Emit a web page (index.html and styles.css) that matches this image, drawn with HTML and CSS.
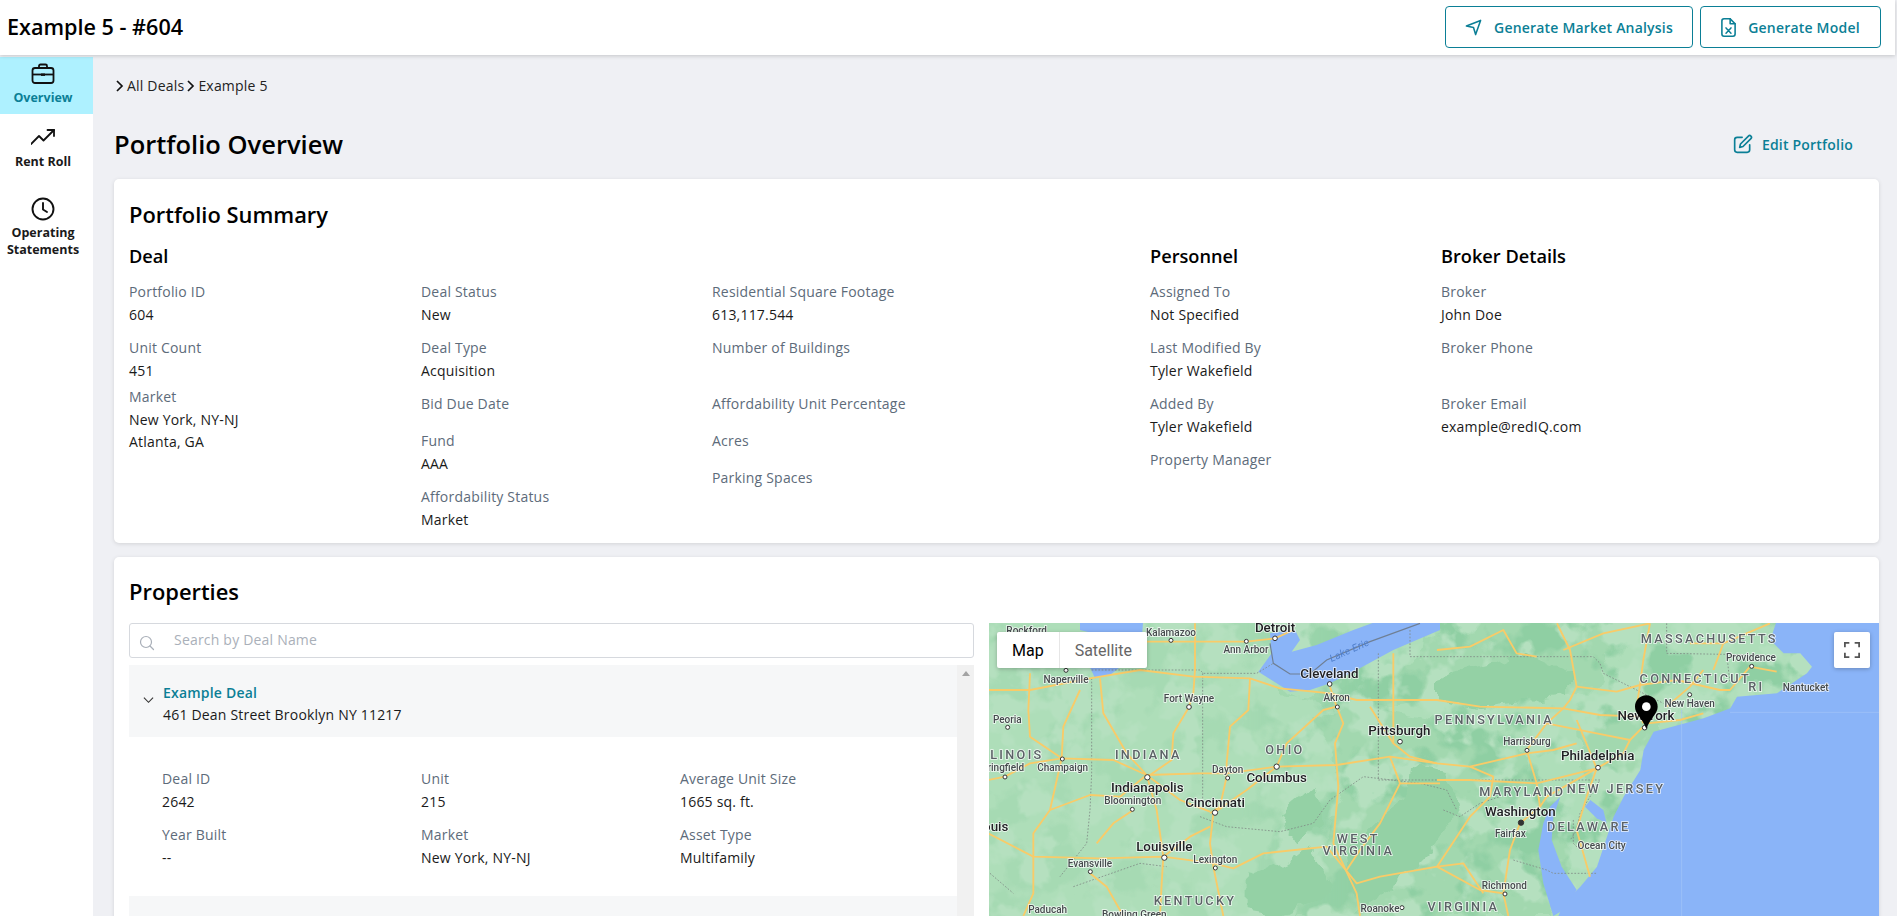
FILE: index.html
```html
<!DOCTYPE html>
<html lang="en">
<head>
<meta charset="utf-8">
<title>Example 5 - #604</title>
<link rel="stylesheet" href="styles.css">
</head>
<body>
<header class="topbar">
  <h1 class="deal-title">Example 5 - #604</h1>
  <div class="actions">
    <button class="btn btn-market">
      <svg class="btn-icon" viewBox="0 0 24 24" fill="none" stroke="currentColor" stroke-width="2.2" stroke-linejoin="round" stroke-linecap="round"><path d="M2 10 22 2l-7 20-3-10z"/></svg>
      Generate Market Analysis
    </button>
    <button class="btn btn-model">
      <svg class="btn-icon" viewBox="3 0.5 18 23" fill="none" stroke="currentColor" stroke-width="1.9" stroke-linejoin="round" stroke-linecap="round"><path d="M14 1.500H6.500A2.500 2.500 0 0 0 4 4v16a2.500 2.500 0 0 0 2.500 2.500h11A2.500 2.500 0 0 0 20 20V7.500z"/><path d="M14 1.500v6h6"/><path d="m9 12.500 6 6.500M15 12.500l-6 6.500" stroke-width="1.800"/></svg>
      Generate Model
    </button>
  </div>
</header>
<div class="shell">
  <nav class="sidebar">
    <a class="nav-item nav-active">
      <svg class="nav-icon" viewBox="0 0 24 24" fill="none" stroke="#111" stroke-width="1.8" stroke-linejoin="round"><rect x="1.500" y="6" width="21" height="15" rx="2.500"/><path d="M8 6V4a1.500 1.500 0 0 1 1.500-1.500h5A1.500 1.500 0 0 1 16 4v2"/><path d="M1.500 12.500h21"/><rect x="10" y="11.500" width="4" height="2.400" fill="#111" stroke="none"/></svg>
      <span>Overview</span>
    </a>
    <a class="nav-item nav-rent">
      <svg class="nav-icon" viewBox="0 0 24 24" fill="none" stroke="#111" stroke-width="1.8" stroke-linecap="round" stroke-linejoin="round"><path d="m0 19 8-8 4.500 4.500L23 5"/><path d="M16.500 5H23v6"/></svg>
      <span>Rent Roll</span>
    </a>
    <a class="nav-item nav-op">
      <svg class="nav-icon" viewBox="0 0 24 24" fill="none" stroke="#111" stroke-width="1.900" stroke-linecap="round" stroke-linejoin="round"><circle cx="12" cy="12" r="10.500"/><path d="M12 6v6.500l4 2.500"/></svg>
      <span>Operating<br>Statements</span>
    </a>
  </nav>
  <main class="content">
    <div class="crumbs">
      <svg class="crumb-icon" viewBox="0 0 10 14" fill="none" stroke="#111" stroke-width="1.700"><path d="m2 2 5 5-5 5"/></svg>
      <span>All Deals</span>
      <svg class="crumb-icon" viewBox="0 0 10 14" fill="none" stroke="#111" stroke-width="1.700"><path d="m2 2 5 5-5 5"/></svg>
      <span>Example 5</span>
    </div>
    <div class="page-head">
      <h2 class="page-title">Portfolio Overview</h2>
      <a class="edit-link">
        <svg class="edit-icon" viewBox="0 0 24 24" fill="none" stroke="currentColor" stroke-width="2" stroke-linecap="round" stroke-linejoin="round"><path d="M11 4H5a3 3 0 0 0-3 3v12a3 3 0 0 0 3 3h12a3 3 0 0 0 3-3v-6"/><path d="M18.500 2.500a2.100 2.100 0 0 1 3 3L12 15l-4 1 1-4z"/></svg>
        Edit Portfolio
      </a>
    </div>

    <section class="card summary">
      <h3 class="card-title">Portfolio Summary</h3>
      <div class="summary-grid">
        <div class="col">
          <h4 class="section-title">Deal</h4>
          <div class="field"><div class="label">Portfolio ID</div><div class="value">604</div></div>
          <div class="field field-tight"><div class="label">Unit Count</div><div class="value">451</div></div>
          <div class="field"><div class="label">Market</div><div class="value">New York, NY-NJ</div><div class="value">Atlanta, GA</div></div>
        </div>
        <div class="col">
          <h4 class="section-title section-blank">&nbsp;</h4>
          <div class="field"><div class="label">Deal Status</div><div class="value">New</div></div>
          <div class="field"><div class="label">Deal Type</div><div class="value">Acquisition</div></div>
          <div class="field field-blank"><div class="label">Bid Due Date</div></div>
          <div class="field"><div class="label">Fund</div><div class="value">AAA</div></div>
          <div class="field"><div class="label">Affordability Status</div><div class="value">Market</div></div>
        </div>
        <div class="col col-wide">
          <h4 class="section-title section-blank">&nbsp;</h4>
          <div class="field"><div class="label">Residential Square Footage</div><div class="value">613,117.544</div></div>
          <div class="field"><div class="label">Number of Buildings</div><div class="value"></div></div>
          <div class="field field-blank"><div class="label">Affordability Unit Percentage</div></div>
          <div class="field field-blank"><div class="label">Acres</div></div>
          <div class="field field-blank"><div class="label">Parking Spaces</div></div>
        </div>
        <div class="col">
          <h4 class="section-title">Personnel</h4>
          <div class="field"><div class="label">Assigned To</div><div class="value">Not Specified</div></div>
          <div class="field"><div class="label">Last Modified By</div><div class="value">Tyler Wakefield</div></div>
          <div class="field"><div class="label">Added By</div><div class="value">Tyler Wakefield</div></div>
          <div class="field"><div class="label">Property Manager</div></div>
        </div>
        <div class="col">
          <h4 class="section-title">Broker Details</h4>
          <div class="field"><div class="label">Broker</div><div class="value">John Doe</div></div>
          <div class="field"><div class="label">Broker Phone</div><div class="value"></div></div>
          <div class="field"><div class="label">Broker Email</div><div class="value">example@redIQ.com</div></div>
        </div>
      </div>
    </section>

    <section class="card properties">
      <h3 class="card-title">Properties</h3>
      <div class="prop-grid">
        <div class="prop-left">
          <label class="search">
            <svg class="search-icon" viewBox="0 0 16 16" fill="none" stroke="#a9afb8" stroke-width="1.200" stroke-linecap="round"><circle cx="7" cy="7" r="5.500"/><path d="m11 11 3.500 3.500"/></svg>
            <input class="search-input" type="text" placeholder="Search by Deal Name">
          </label>
          <div class="list-wrap">
            <div class="list">
              <div class="acc-head">
                <svg class="acc-chevron" viewBox="0 0 12 8" fill="none" stroke="#333" stroke-width="1.200"><path d="m1 1.500 5 5 5-5"/></svg>
                <div>
                  <div class="acc-name">Example Deal</div>
                  <div class="value">461 Dean Street Brooklyn NY 11217</div>
                </div>
              </div>
              <div class="acc-body">
                <div class="field"><div class="label">Deal ID</div><div class="value">2642</div></div>
                <div class="field"><div class="label">Unit</div><div class="value">215</div></div>
                <div class="field"><div class="label">Average Unit Size</div><div class="value">1665 sq. ft.</div></div>
                <div class="field"><div class="label">Year Built</div><div class="value">--</div></div>
                <div class="field"><div class="label">Market</div><div class="value">New York, NY-NJ</div></div>
                <div class="field"><div class="label">Asset Type</div><div class="value">Multifamily</div></div>
              </div>
              <div class="acc-head acc-next"></div>
            </div>
            <div class="scrollbar"><span class="scroll-arrow"></span></div>
          </div>
        </div>
        <div class="map">
          <svg class="map-svg" viewBox="0 0 890 293" preserveAspectRatio="none">
            <defs>
              <filter id="rag" filterUnits="userSpaceOnUse" x="-100" y="-100" width="3000" height="1200">
                <feTurbulence type="fractalNoise" baseFrequency=".018" numOctaves="3" seed="7"/>
                <feDisplacementMap in="SourceGraphic" scale="55" xChannelSelector="R" yChannelSelector="G"/>
              </filter>
              <filter id="blotchA" filterUnits="userSpaceOnUse" x="0" y="0" width="2800" height="1000" color-interpolation-filters="sRGB">
                <feTurbulence type="fractalNoise" baseFrequency=".007" numOctaves="4" seed="11"/>
                <feColorMatrix values="0 0 0 0 .56  0 0 0 0 .81  0 0 0 0 .64  9 0 0 0 -4.500"/>
              </filter>
              <filter id="blotchB" filterUnits="userSpaceOnUse" x="0" y="0" width="2800" height="1000" color-interpolation-filters="sRGB">
                <feTurbulence type="fractalNoise" baseFrequency=".009" numOctaves="4" seed="23"/>
                <feColorMatrix values="0 0 0 0 .71  0 0 0 0 .88  0 0 0 0 .75  9 0 0 0 -4.600"/>
              </filter>
              <linearGradient id="eastFade" x1="0" x2="1" y1="0" y2="0">
                <stop offset=".28" stop-color="#fff" stop-opacity=".25"/>
                <stop offset=".42" stop-color="#fff" stop-opacity="1"/>
              </linearGradient>
              <mask id="eastMask" maskUnits="userSpaceOnUse" x="0" y="0" width="2800" height="1000">
                <rect x="0" y="0" width="2800" height="1000" fill="url(#eastFade)"/>
              </mask>
            </defs>
            <g transform="translate(-9 -13) scale(.33333)">
              <rect x="0" y="0" width="2800" height="1000" class="land"/>
              <g class="patch-mid" filter="url(#rag)">
                <path d="M900 230 1060 300 1380 270 1500 180 1900 140 1900 40 1500 40 1300 160 1200 180 1040 260 900 250Z"/>
                <path d="M1000 330 1090 520 1050 650 1000 760 950 918 1700 918 1800 700 1600 400 1400 330 1200 300 1100 290Z"/>
                <path d="M1330 80 1900 60 1850 250 1300 270Z"/>
                <path d="M1800 350 2050 300 2020 500 1810 520Z"/>
              </g>
              <g mask="url(#eastMask)"><rect x="0" y="0" width="2800" height="1000" filter="url(#blotchA)"/></g>
              <rect x="0" y="0" width="2800" height="1000" filter="url(#blotchB)"/>
              <g class="patch-dark" filter="url(#rag)">
                <path d="M1371 210 1500 170 1640 130 1770 190 1770 260 1500 290 1371 270Z"/>
                <path d="M1100 720 1180 640 1280 560 1290 470 1400 490 1430 600 1350 720 1250 820 1130 900Z"/>
                <path d="M900 620 1000 530 1030 620 960 700Z"/>
                <path d="M800 800 1000 720 1060 840 900 918 800 900Z"/>
              </g>
              <g class="water">
                <path d="M300 0H492L485 90H420L300 60Z"/>
                <path d="M330 172H420L390 195 345 205Z"/>
                <path d="M835 185 875 130 870 70 945 60 960 90 935 125 1010 105 1120 60 1230 20 1380 0V60L1240 120 1120 185 1050 220 990 240 930 245 890 220Z"/>
                <path d="M2401 0H2900V1000H1701L1751 880 1801 830 1851 770 1901 620 1931 560 1981 480 1991 420 2021 365 2171 325 2251 295 2271 260 2391 250 2481 190 2496 170 2461 130 2411 130 2371 90Z"/>
                <path d="M1831 570 1870 600 1880 640 1850 625 1815 590Z"/>
                <path d="M1741 560 1720 620 1715 690 1745 770 1790 840 1750 900 1720 918 1690 820 1675 720 1690 640 1710 590Z"/>
              </g>
              <path class="seam" d="M2105 300V1000M2250 307H2800"/>
              <g class="border">
                <path d="M335 205V490L330 600 320 700 240 800"/>
                <path d="M668 190V600"/>
                <path d="M335 180H660L670 190H830L880 160"/>
                <path d="M1195 130V510H1380H1600L1770 510 1860 510 1800 610 1790 660 1771 690"/>
                <path d="M1290 60V140H1380L1620 140H1840L1860 160 1870 190 2050 280"/>
                <path d="M660 620 740 650 900 665 1000 640 1050 570 1150 500 1320 520 1400 540 1430 600"/>
                <path d="M2060 40 2060 130 2350 135"/>
                <path d="M2240 130 2250 220"/>
                <path d="M1780 630 1780 700 1800 720"/>
                <path d="M1600 750 1700 780 1720 790H1850"/>
                <path d="M30 790 100 850M280 830 480 760 560 770"/>
                <path d="M1390 600 1440 620 1500 580 1560 560"/>
              </g>
              <g class="road">
                <path d="M25 240 150 240 330 205 480 180 640 200 810 205 900 235 1000 245 1050 250"/>
                <path d="M500 95 640 95 800 95 885 85 940 60"/>
                <path d="M645 40V180L640 250 625 295 580 370 575 450 510 495"/>
                <path d="M810 205 805 300 750 350 740 460 740 500 720 590 690 610"/>
                <path d="M25 510 75 500 150 460 245 445 400 450 500 495 660 490 740 490 890 470 1070 465 1230 440 1371 460 1470 470 1640 430 1720 420 1790 400"/>
                <path d="M360 205 370 310 440 430 500 495 530 600 550 740 545 820 540 918"/>
                <path d="M300 240 250 350 245 445 210 600 160 670 160 850 130 918"/>
                <path d="M150 190 145 300 150 380 245 445"/>
                <path d="M210 600 330 555 420 560 500 495"/>
                <path d="M25 670 160 740 360 745 550 740 700 760 760 775 850 730 1040 710 1130 820 1200 800 1371 770 1450 760 1510 850"/>
                <path d="M700 610 690 700 700 770 730 918"/>
                <path d="M890 470 920 400 1030 300 1070 290 1050 230"/>
                <path d="M1070 290 1090 340 1065 400 1075 530 1060 700 1130 850 1140 918"/>
                <path d="M1050 250 1130 270 1371 270 1500 290 1750 295 1860 315 1980 320"/>
                <path d="M1240 130V400L1290 440 1371 460"/>
                <path d="M1230 440 1260 520 1200 640 1140 720 1100 780"/>
                <path d="M1260 520H1380"/>
                <path d="M700 610 800 540 890 470"/>
                <path d="M500 495 600 570 690 605"/>
                <path d="M350 700 400 640 460 600"/>
                <path d="M550 740 630 680 690 650"/>
                <path d="M430 918 380 830 330 790"/>
                <path d="M1170 290 1195 330 1240 400"/>
                <path d="M1371 120 1470 110 1570 60 1610 130 1670 140"/>
                <path d="M1731 40 1770 120 1790 230 1770 270 1750 295 1700 340 1640 420"/>
                <path d="M1790 230 1910 245 1980 225 2090 210 2220 240 2250 240 2310 170 2390 185"/>
                <path d="M2010 40 1990 150 1980 225 1970 290 1990 340"/>
                <path d="M2170 180 2130 230 2060 290"/>
                <path d="M1990 350 1950 390 1930 430 1850 475 1700 560 1680 590 1620 640 1590 720 1570 850 1585 918"/>
                <path d="M1640 420 1670 520 1680 590"/>
                <path d="M1470 470 1540 500 1530 560 1470 620 1371 770 1500 840 1570 850"/>
                <path d="M1371 510H1470L1670 520 1850 475"/>
                <path d="M1790 330 1850 475"/>
                <path d="M1700 340 1850 370 1950 390"/>
                <path d="M1750 120 1870 70 2010 40"/>
                <path d="M2130 100 2230 100 2370 40"/>
                <path d="M2230 100 2200 180"/>
                <path d="M2000 340 2100 330 2170 310"/>
                <path d="M1850 475 1820 560 1790 660 1830 800"/>
              </g>
              <path class="ferry" d="M870 100 880 160 930 192H990L1040 150 1170 95 1320 40"/>
              <g class="dots">
                <circle cx="573" cy="91" r="6"/><circle cx="799" cy="94" r="6"/><circle cx="885" cy="85" r="7"/>
                <circle cx="258" cy="181" r="6"/><circle cx="1049" cy="222" r="7"/><circle cx="1072" cy="291" r="6"/>
                <circle cx="627" cy="291" r="7"/><circle cx="83" cy="352" r="6"/><circle cx="1260" cy="395" r="7"/>
                <circle cx="247" cy="447" r="6"/><circle cx="75" cy="501" r="6"/><circle cx="502" cy="502" r="8"/>
                <circle cx="743" cy="504" r="6"/><circle cx="890" cy="470" r="8"/><circle cx="457" cy="598" r="6"/>
                <circle cx="705" cy="608" r="8"/><circle cx="553" cy="743" r="8"/><circle cx="706" cy="774" r="6"/>
                <circle cx="331" cy="785" r="6"/><circle cx="1266" cy="893" r="6"/>
                <circle cx="2315" cy="169" r="6"/><circle cx="2129" cy="254" r="6"/><circle cx="1994" cy="353" r="7"/>
                <circle cx="1641" cy="421" r="6"/><circle cx="1854" cy="473" r="7"/><circle cx="1575" cy="852" r="6"/>
                <circle cx="1623" cy="638" r="8" class="dot-capital"/>
              </g>
              <g class="lbl-sm">
                <text x="140" y="72">Rockford</text>
                <text x="573" y="78">Kalamazoo</text>
                <text x="798" y="128">Ann Arbor</text>
                <text x="258" y="218">Naperville</text>
                <text x="1070" y="274">Akron</text>
                <text x="627" y="277">Fort Wayne</text>
                <text x="82" y="338">Peoria</text>
                <text x="60" y="484">Springfield</text>
                <text x="248" y="482">Champaign</text>
                <text x="743" y="488">Dayton</text>
                <text x="458" y="581">Bloomington</text>
                <text x="330" y="770">Evansville</text>
                <text x="706" y="760">Lexington</text>
                <text x="203" y="910">Paducah</text>
                <text x="463" y="924">Bowling Green</text>
                <text x="1200" y="905">Roanoke</text>
                <text x="2313" y="152">Providence</text>
                <text x="2477" y="244">Nantucket</text>
                <text x="2129" y="290">New Haven</text>
                <text x="1641" y="406">Harrisburg</text>
                <text x="1591" y="680">Fairfax</text>
                <text x="1865" y="716">Ocean City</text>
                <text x="1573" y="837">Richmond</text>
              </g>
              <g class="lbl-lg">
                <text x="885" y="66">Detroit</text>
                <text x="1048" y="204">Cleveland</text>
                <text x="1258" y="374">Pittsburgh</text>
                <text x="890" y="517">Columbus</text>
                <text x="502" y="547">Indianapolis</text>
                <text x="705" y="590">Cincinnati</text>
                <text x="85" y="663" class="lbl-end">St. Louis</text>
                <text x="553" y="722">Louisville</text>
                <text x="1998" y="331">New York</text>
                <text x="1853" y="451">Philadelphia</text>
                <text x="1621" y="619">Washington</text>
              </g>
              <g class="lbl-st">
                <text x="88" y="446">ILLINOIS</text>
                <text x="505" y="446">INDIANA</text>
                <text x="915" y="431">OHIO</text>
                <text x="1135" y="698">WEST</text>
                <text x="1135" y="735">VIRGINIA</text>
                <text x="645" y="886">KENTUCKY</text>
                <text x="1450" y="902">VIRGINIA</text>
                <text x="2188" y="99">MASSACHUSETTS</text>
                <text x="2146" y="218">CONNECTICUT</text>
                <text x="2329" y="243">RI</text>
                <text x="1543" y="341">PENNSYLVANIA</text>
                <text x="1908" y="549">NEW JERSEY</text>
                <text x="1627" y="557">MARYLAND</text>
                <text x="1826" y="662">DELAWARE</text>
              </g>
              <text class="lbl-lake" x="1112" y="130" transform="rotate(-24 1112 130)">Lake Erie</text>
              <path class="pin" d="M1999 256c-19 0-34 15-34 34 0 22 20 30 34 66 14-36 34-44 34-66 0-19-15-34-34-34Z"/>
              <circle class="pin-dot" cx="1999" cy="290" r="13"/>
            </g>
          </svg>
          <div class="map-type">
            <button class="map-btn map-btn-on">Map</button>
            <button class="map-btn">Satellite</button>
          </div>
          <button class="map-full" aria-label="Toggle fullscreen">
            <svg viewBox="0 0 18 18" fill="none" stroke="#555" stroke-width="2"><path d="M1 6V1h5M12 1h5v5M17 12v5h-5M6 17H1v-5"/></svg>
          </button>
        </div>
      </div>
    </section>
  </main>
</div>
</body>
</html>
```

FILE: styles.css
```css
* { box-sizing: border-box; }
html, body { margin: 0; height: 916px; overflow: hidden; }
body {
  background: #eff0f4;
  color: #111;
  font-family: "Open Sans", "Liberation Sans", sans-serif;
  font-size: 14px;
  letter-spacing: .2px;
}
h1, h2, h3, h4 { margin: 0; font-weight: 550; letter-spacing: 0; }

.topbar {
  width: 1895px;
  height: 55px;
  margin-bottom: 2px;
  padding: 6px 14px 0 7px;
  background: #fff;
  box-shadow: 0 1px 4px rgba(0, 0, 0, .18);
  display: flex;
  justify-content: space-between;
  position: relative;
  z-index: 2;
}
.deal-title { font-size: 21.6px; line-height: 42px; color: #000; }
.actions { display: flex; gap: 7px; }
.btn {
  height: 42px;
  border: 1px solid #0b7f96;
  border-radius: 4px;
  background: #fff;
  color: #0b7f96;
  font: 600 14px "Open Sans", sans-serif;
  letter-spacing: .2px;
  display: flex;
  align-items: center;
  justify-content: center;
}
.btn-market { width: 248px; gap: 12px; }
.btn-model { width: 181px; gap: 12px; }
.btn-icon { width: 15px; height: 19px; flex: none; }
.btn-market .btn-icon { width: 17px; height: 17px; }

.shell { display: flex; height: 859px; }
.sidebar { width: 93px; flex: none; background: #fff; }
.nav-item {
  display: flex;
  flex-direction: column;
  align-items: center;
  padding-right: 7px;
  font-size: 12.5px;
  font-weight: 700;
  line-height: 17px;
  letter-spacing: 0;
  text-align: center;
  color: #1a1a1a;
}
.nav-icon { width: 24px; height: 24px; flex: none; }
.nav-active { height: 57px; padding-top: 5px; gap: 3px; background: #aef1ff; color: #0b7f96; }
.nav-rent { height: 61px; padding-top: 11px; gap: 4px; }
.nav-op { padding-top: 22px; gap: 3px; }

.content { flex: 1; min-width: 0; padding: 19px 18px 0 21px; }
.crumbs { display: flex; align-items: center; height: 20px; gap: 2px; padding-left: 1px; line-height: 20px; color: #222; }
.crumb-icon { width: 10px; height: 14px; flex: none; }
.page-head { display: flex; justify-content: space-between; align-items: center; height: 40px; margin: 28px 0 15px; }
.page-title { font-size: 25.5px; line-height: 40px; color: #000; }
.edit-link {
  display: flex;
  align-items: center;
  gap: 9px;
  margin-right: 26px;
  color: #0b7f96;
  font-size: 14px;
  font-weight: 600;
}
.edit-icon { width: 20px; height: 20px; }

.card {
  background: #fff;
  border-radius: 5px;
  box-shadow: 0 1px 4px rgba(0, 0, 0, .12);
}
.card-title { font-size: 21.9px; line-height: 28px; color: #000; }
.summary { height: 364px; padding: 22px 15px 0; margin-bottom: 14px; }
.summary-grid { display: grid; grid-template-columns: 292px 291px 438px 291px 1fr; margin-top: 16px; }
.section-title { font-size: 18.2px; line-height: 22px; margin-bottom: 14px; color: #000; }

.field { margin-bottom: 12px; }
.field-tight { margin-bottom: 5px; }
.field-blank { margin-bottom: 15px; }
.label { line-height: 22px; color: #5d6b7a; }
.value { line-height: 20px; padding-top: 2px; min-height: 22px; color: #1a1a1a; }

.properties { height: 400px; padding: 21px 0 0 15px; }
.prop-grid { display: flex; gap: 15px; margin-top: 17px; }
.prop-left { width: 845px; flex: none; }
.search {
  display: flex;
  align-items: center;
  height: 35px;
  border: 1px solid #d6d9de;
  border-radius: 3px;
  padding-left: 9px;
  gap: 19px;
}
.search-icon { width: 16px; height: 16px; flex: none; margin-top: 5px; }
.search-input {
  flex: 1;
  border: 0;
  outline: 0;
  padding: 0;
  margin-bottom: 2px;
  font: 14px "Open Sans", sans-serif;
  letter-spacing: .2px;
  color: #333;
  background: transparent;
}
.search-input::placeholder { color: #aab0b9; opacity: 1; }

.list-wrap { display: flex; margin-top: 7px; }
.list { width: 828px; flex: none; }
.acc-head {
  display: flex;
  align-items: center;
  gap: 9px;
  height: 72px;
  padding: 4px 0 0 14px;
  background: #f6f7f8;
}
.acc-chevron { width: 11px; height: 8px; flex: none; margin-bottom: 6px; }
.acc-name { line-height: 20px; padding-top: 2px; font-weight: 600; color: #0b7f96; }
.acc-body {
  display: grid;
  grid-template-columns: 259px 259px 1fr;
  padding: 31px 0 16px 33px;
}
.acc-next { height: 40px; }
.scrollbar { width: 17px; height: 251px; background: #f1f1f1; display: flex; justify-content: center; padding-top: 6px; }
.scroll-arrow {
  width: 0;
  height: 0;
  border: 4px solid transparent;
  border-top: 0;
  border-bottom: 5px solid #a3a3a3;
}

.map { position: relative; width: 890px; height: 293px; overflow: hidden; letter-spacing: 0; }
.map-svg { display: block; width: 890px; height: 293px; filter: blur(.3px); }
.map-type {
  position: absolute;
  left: 8px;
  top: 9px;
  display: flex;
  height: 36px;
  background: #fff;
  border-radius: 2px;
  box-shadow: 0 1px 4px rgba(0, 0, 0, .25);
}
.map-btn {
  border: 0;
  background: transparent;
  font: 16px Roboto, sans-serif;
  color: #666;
  padding: 0 15px;
}
.map-btn-on { color: #000; border-right: 1px solid #e6e6e6; }
.map-full {
  position: absolute;
  right: 9px;
  top: 9px;
  width: 36px;
  height: 36px;
  padding: 10px;
  border: 0;
  background: #fff;
  border-radius: 2px;
  box-shadow: 0 1px 4px rgba(0, 0, 0, .25);
}
.map-full svg { display: block; width: 16px; height: 16px; }

.land { fill: #aedeb9; }
.patch-mid { fill: #a2d8af; }
.patch-dark { fill: #94d1a5; }
.water { fill: #8ab4f8; }
.seam { fill: none; stroke: #a5c5f8; stroke-width: 2; }
.border { fill: none; stroke: #7f8a86; stroke-width: 2.5; stroke-dasharray: 5 5; }
.road { fill: none; stroke: #f9cb68; stroke-width: 5.5; stroke-linejoin: round; }
.ferry { fill: none; stroke: #6f7f94; stroke-width: 3.5; }
.dots circle { fill: #fff; stroke: #333; stroke-width: 3; }
.dots .dot-capital { fill: #333; stroke: #333; }
.lbl-sm text, .lbl-lg text, .lbl-st text {
  font-family: Roboto, sans-serif;
  text-anchor: middle;
  paint-order: stroke;
  stroke: rgba(255, 255, 255, .8);
  stroke-width: 5px;
}
.lbl-sm text { font-size: 30px; font-weight: 500; fill: #444a4c; }
.lbl-lg text { font-size: 40px; font-weight: 500; fill: #202124; }
.lbl-st text { font-size: 38px; font-weight: 500; letter-spacing: 7px; fill: #5a6165; }
.lbl-lg .lbl-end { text-anchor: end; }
.lbl-lake { font: italic 30px Roboto, sans-serif; letter-spacing: 1px; fill: #4f7fcc; text-anchor: middle; }
.pin { fill: #000; }
.pin-dot { fill: #fff; }
```
